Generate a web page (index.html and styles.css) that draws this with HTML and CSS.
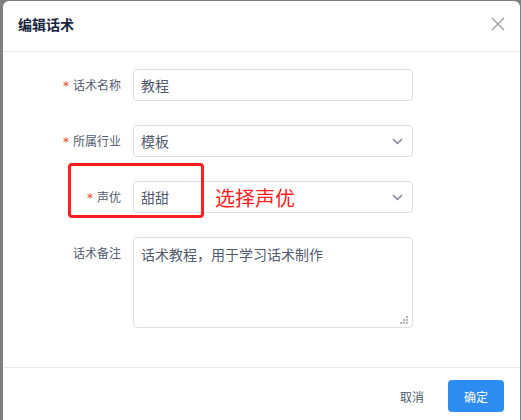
FILE: index.html
```html
<!DOCTYPE html>
<html lang="zh-CN">
<head>
<meta charset="utf-8">
<title>编辑话术</title>
<link rel="stylesheet" href="styles.css">
</head>
<body>
<div class="modal">
  <div class="modal-header">
    <div class="modal-title">编辑话术</div>
    <span class="modal-close">
      <svg width="14" height="14" viewBox="0 0 14 14"><path d="M1 1 L13 13 M13 1 L1 13" stroke="#999" stroke-width="1.3" fill="none"/></svg>
    </span>
  </div>
  <div class="modal-body">
    <div class="form-row">
      <label class="form-label required">话术名称</label>
      <div class="field input">教程</div>
    </div>
    <div class="form-row">
      <label class="form-label required">所属行业</label>
      <div class="field select">
        <span>模板</span>
        <svg class="arrow" width="11" height="7" viewBox="0 0 11 7"><path d="M1 1 L5.5 5.5 L10 1" stroke="#808695" stroke-width="1.5" fill="none"/></svg>
      </div>
    </div>
    <div class="form-row annotated">
      <label class="form-label required">声优</label>
      <div class="field select">
        <span>甜甜</span>
        <svg class="arrow" width="11" height="7" viewBox="0 0 11 7"><path d="M1 1 L5.5 5.5 L10 1" stroke="#808695" stroke-width="1.5" fill="none"/></svg>
      </div>
      <div class="mark-box"></div>
      <div class="mark-text">选择声优</div>
    </div>
    <div class="form-row">
      <label class="form-label">话术备注</label>
      <div class="field textarea">话术教程，用于学习话术制作
        <svg class="grip" width="9" height="9" viewBox="0 0 9 9">
          <rect x="6" y="0" width="2" height="2" fill="#b5b5b5"/>
          <rect x="3" y="3" width="2" height="2" fill="#b5b5b5"/>
          <rect x="6" y="3" width="2" height="2" fill="#b5b5b5"/>
          <rect x="0" y="6" width="2" height="2" fill="#b5b5b5"/>
          <rect x="3" y="6" width="2" height="2" fill="#b5b5b5"/>
          <rect x="6" y="6" width="2" height="2" fill="#b5b5b5"/>
        </svg>
      </div>
    </div>
  </div>
  <div class="modal-footer">
    <button class="btn btn-text">取消</button>
    <button class="btn btn-primary">确定</button>
  </div>
</div>
</body>
</html>
```
FILE: styles.css
```css
* { box-sizing: border-box; }
html, body {
  margin: 0;
  padding: 0;
  height: 100%;
  overflow: hidden;
}
body {
  background: #808080;
  font-family: "Noto Sans CJK SC", "Noto Sans", sans-serif;
  color: #515a6e;
}
.modal {
  margin: 1px 0 0 3px;
  width: 517px;
  height: 440px;
  background: #fff;
  border-radius: 6px 6px 0 0;
}
.modal-header {
  display: flex;
  justify-content: space-between;
  align-items: flex-start;
  height: 51px;
  padding: 13px 16px 0 15px;
  border-bottom: 1px solid #e8eaec;
}
.modal-title {
  font-size: 14px;
  line-height: 20px;
  font-weight: bold;
  color: #17233d;
}
.modal-close {
  display: flex;
  margin-top: 3px;
  margin-right: -1px;
}
.modal-body {
  padding: 17px 16px 39px 16px;
  display: flex;
  flex-direction: column;
  gap: 24px;
}
.form-row {
  display: flex;
  align-items: flex-start;
  position: relative;
}
.form-label {
  width: 114px;
  height: 32px;
  overflow: hidden;
  padding-right: 12px;
  text-align: right;
  font-size: 12px;
  line-height: 32px;
  color: #515a6e;
}
.form-label.required::before {
  content: "*";
  color: #ed4014;
  margin-right: 4px;
  font-family: "DejaVu Sans", sans-serif;
  font-size: 12px;
  line-height: 12px;
}
.field {
  width: 280px;
  border: 1px solid #dcdee2;
  border-radius: 4px;
  font-size: 14px;
  color: #515a6e;
}
.input, .select {
  height: 32px;
  line-height: 30px;
  padding: 0 7px;
}
.select {
  display: flex;
  justify-content: space-between;
  align-items: center;
}
.arrow {
  margin-right: 2px;
}
.textarea {
  position: relative;
  height: 91px;
  padding: 5px 7px;
  line-height: 22px;
}
.grip {
  position: absolute;
  right: 3px;
  bottom: 2px;
}
.mark-box {
  position: absolute;
  left: 49px;
  top: -18px;
  width: 136px;
  height: 55px;
  border: 3px solid #ff1f1f;
  border-radius: 4px;
}
.mark-text {
  position: absolute;
  left: 196px;
  top: 4px;
  font-size: 20px;
  line-height: 26px;
  color: #ff2020;
}
.modal-footer {
  display: flex;
  justify-content: flex-end;
  gap: 8px;
  padding: 12px 16px 0 0;
  border-top: 1px solid #e8eaec;
}
.btn {
  height: 32px;
  border-radius: 4px;
  font-family: "Noto Sans CJK SC", sans-serif;
  font-size: 12px;
  border: 1px solid transparent;
  cursor: pointer;
}
.btn-text {
  background: transparent;
  color: #515a6e;
  padding: 0 15px;
}
.btn-primary {
  width: 56px;
  background: #2d8cf0;
  color: #fff;
  padding: 0;
}
```
